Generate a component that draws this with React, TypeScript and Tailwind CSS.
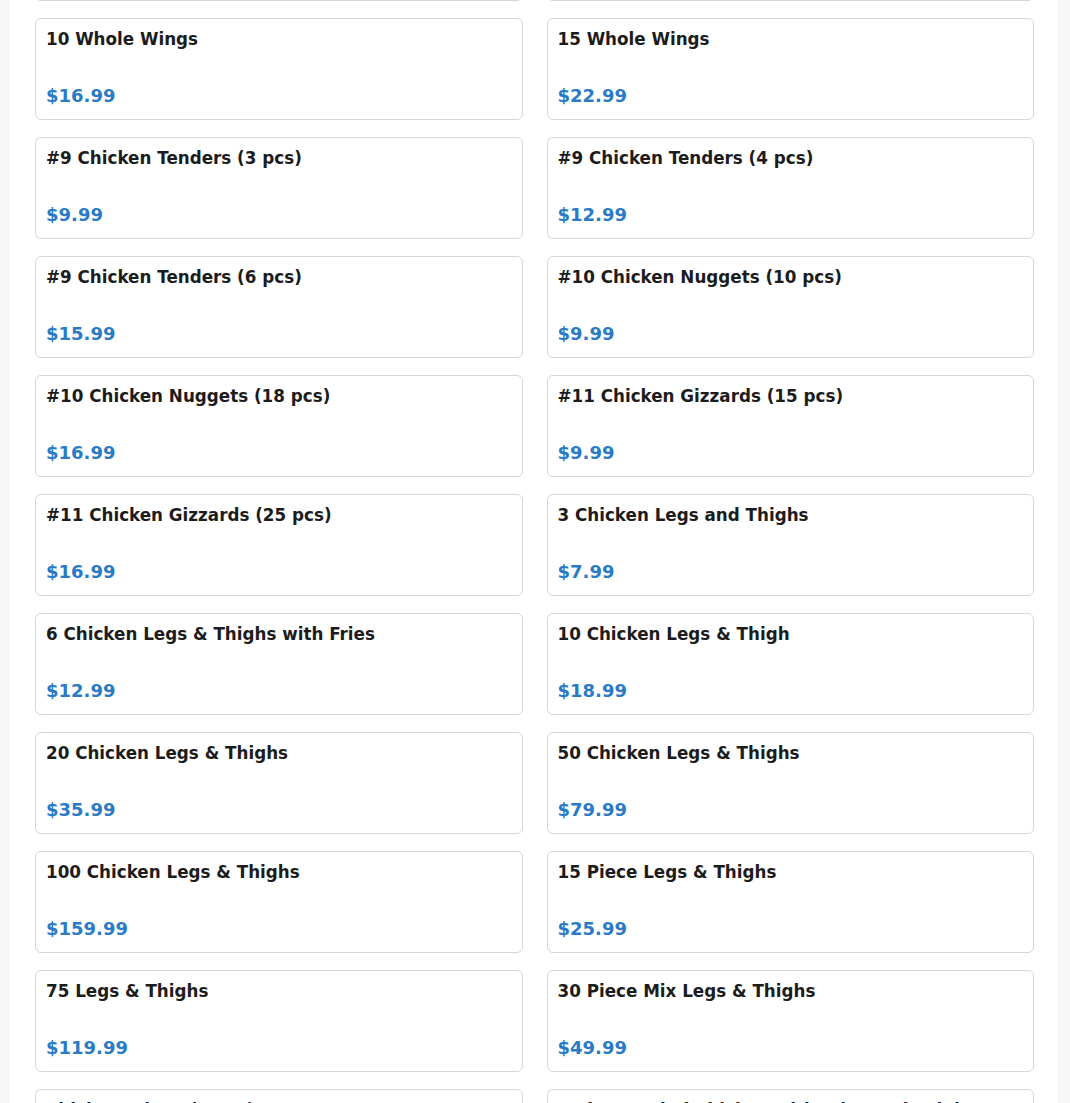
import React from "react";

type Item = { name: string; price: string };

const items: Item[] = [
  { name: "8 Whole Wings", price: "$13.99" },
  { name: "12 Whole Wings", price: "$18.99" },
  { name: "10 Whole Wings", price: "$16.99" },
  { name: "15 Whole Wings", price: "$22.99" },
  { name: "#9 Chicken Tenders (3 pcs)", price: "$9.99" },
  { name: "#9 Chicken Tenders (4 pcs)", price: "$12.99" },
  { name: "#9 Chicken Tenders (6 pcs)", price: "$15.99" },
  { name: "#10 Chicken Nuggets (10 pcs)", price: "$9.99" },
  { name: "#10 Chicken Nuggets (18 pcs)", price: "$16.99" },
  { name: "#11 Chicken Gizzards (15 pcs)", price: "$9.99" },
  { name: "#11 Chicken Gizzards (25 pcs)", price: "$16.99" },
  { name: "3 Chicken Legs and Thighs", price: "$7.99" },
  { name: "6 Chicken Legs & Thighs with Fries", price: "$12.99" },
  { name: "10 Chicken Legs & Thigh", price: "$18.99" },
  { name: "20 Chicken Legs & Thighs", price: "$35.99" },
  { name: "50 Chicken Legs & Thighs", price: "$79.99" },
  { name: "100 Chicken Legs & Thighs", price: "$159.99" },
  { name: "15 Piece Legs & Thighs", price: "$25.99" },
  { name: "75 Legs & Thighs", price: "$119.99" },
  { name: "30 Piece Mix Legs & Thighs", price: "$49.99" },
  { name: "Chicken Wings (8 pcs)", price: "$12.99" },
  { name: "2 Pieces Fried Chicken with Fries and Drink", price: "$9.99" },
];

function MenuCard({ item }: { item: Item }) {
  return (
    <div className="h-[102px] border border-[#d6d6d6] rounded-md bg-white px-[10px] pt-[9.5px] pb-[12.5px] flex flex-col justify-between">
      <h3 className="text-[16.75px] leading-[20px] font-bold text-[#1c1c1c]">{item.name}</h3>
      <p className="text-[18px] leading-[22px] font-bold text-[#2a7ac6]">{item.price}</p>
    </div>
  );
}

export default function App() {
  return (
    <div
      className="w-[1070px] h-[1103px] overflow-hidden bg-[#f7f7f7]"
      style={{ fontFamily: '"DejaVu Sans", sans-serif' }}
    >
      <div className="ml-[10px] w-[1048px] h-full bg-white pl-[25px] pr-[24px] flex flex-col overflow-hidden">
        <div className="grid grid-cols-2 gap-x-6 gap-y-[17px] -mt-[101px] shrink-0">
          {items.map((it, i) => (
            <MenuCard key={i} item={it} />
          ))}
        </div>
      </div>
    </div>
  );
}
